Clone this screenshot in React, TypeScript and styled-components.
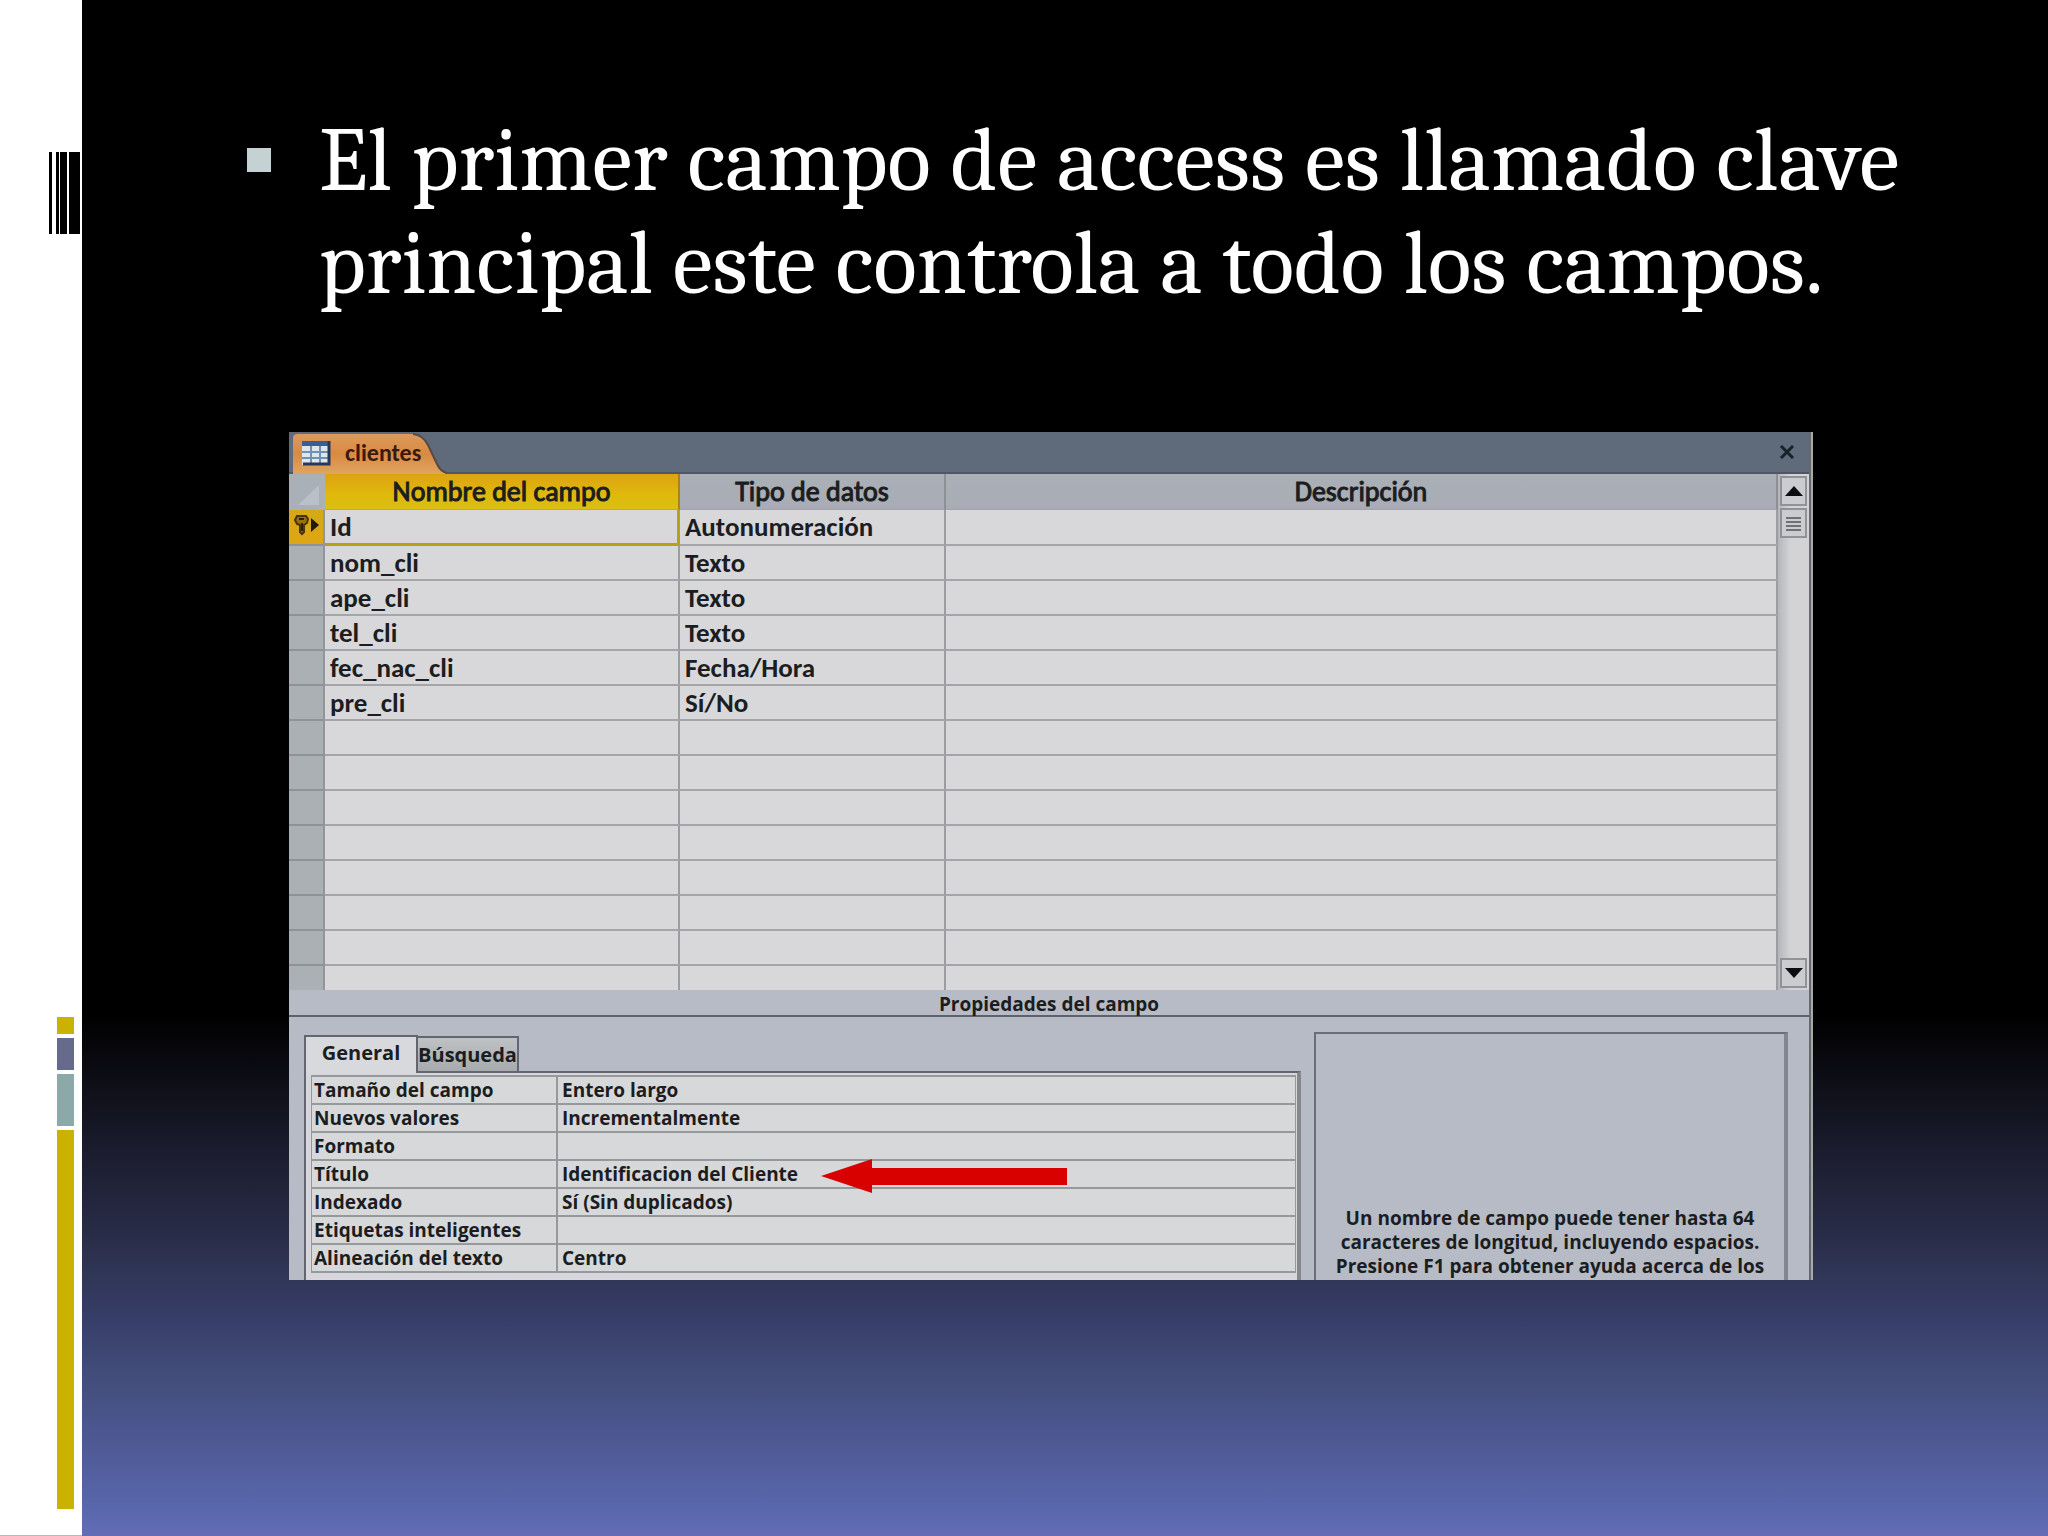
import React, { useState } from "react";
import styled, { createGlobalStyle } from "styled-components";

const gridFont = `Calibri, Carlito, Lato, "Open Sans", sans-serif`;
const propFont = `"Segoe UI", "Open Sans", "Noto Sans", sans-serif`;

const GlobalStyle = createGlobalStyle`
  *, *::before, *::after { box-sizing: border-box; }
  html, body { margin: 0; padding: 0; background: #000; }
  button { font: inherit; color: inherit; margin: 0; padding: 0; border: 0; background: none; }
  h1, p, ul { margin: 0; padding: 0; font-weight: inherit; }
`;

const Slide = styled.div`
  display: flex;
  min-height: 100vh;
  background: linear-gradient(
    to bottom,
    #000 0%,
    #000 66%,
    #0f1019 71%,
    #1b1c2e 75%,
    #282b46 80%,
    #303656 83%,
    #373e69 86%,
    #414b77 89%,
    #485488 92%,
    #515c9a 95%,
    #5866ab 98%,
    #626db5 100%
  );
`;

const Rail = styled.aside`
  flex: 0 0 82px;
  display: flex;
  flex-direction: column;
  justify-content: space-between;
  padding: 152px 2px 26px 49px;
  background: #fff;
  border-bottom: 1px solid #b3b4d6;
`;

const Barcode = styled.div`
  display: flex;
  height: 82px;
`;

const Stripe = styled.span<{ $w: number; $gap: number }>`
  width: ${(p) => p.$w}px;
  margin-right: ${(p) => p.$gap}px;
  background: #000;
`;

const Blocks = styled.div`
  display: flex;
  flex-direction: column;
  gap: 4px;
  padding-left: 8px;
`;

const Block = styled.span<{ $h: number; $color: string }>`
  width: 17px;
  height: ${(p) => p.$h}px;
  background: ${(p) => p.$color};
`;

const Content = styled.main`
  flex: 1;
  min-width: 0;
  padding: 110px 235px 0 207px;
`;

const Points = styled.ul`
  list-style: none;
  margin: 0 -120px 116px -42px;
`;

const Point = styled.li`
  display: flex;
  align-items: flex-start;
  gap: 48px;
  color: #fff;
  font: 90px/103px Cambria, Caladea, "Liberation Serif", serif;
`;

const Marker = styled.span`
  flex: none;
  width: 24px;
  height: 24px;
  margin-top: 38px;
  background: #c5d2d3;
`;

const Window = styled.section`
  height: 848px;
  overflow: hidden;
  background: #b7bbc5;
  border-right: 2px solid #a8aaa6;
  color: #1c1d20;
`;

const Frame = styled.div`
  height: 100%;
  border-right: 2px solid #66696d;
  display: flex;
  flex-direction: column;
`;

const TitleBar = styled.header`
  flex: none;
  display: flex;
  justify-content: space-between;
  height: 42px;
  background: #5f6b7b;
  border-bottom: 2px solid #4e5763;
`;

const FileTab = styled.button`
  position: relative;
  display: flex;
  align-items: center;
  gap: 14px;
  width: 158px;
  height: 42px;
  padding-left: 12px;
  font: 700 24px/28px ${gridFont};
  color: #3a1a10;

  svg, span { position: relative; }
`;

const TabShape = styled.svg`
  && { position: absolute; left: 0; top: 0; }
`;

const CloseButton = styled.button`
  width: 32px;
  height: 40px;
  margin-right: 6px;
  display: grid;
  place-items: center;
`;

const GridArea = styled.div`
  flex: none;
  display: flex;
  height: 516px;
  overflow: hidden;
`;

const Grid = styled.table`
  flex: 1;
  min-width: 0;
  table-layout: fixed;
  border-collapse: separate;
  border-spacing: 0;
  align-self: flex-start;
  font: 700 27px/30px ${gridFont};
`;

const HeadCell = styled.th<{ $active?: boolean }>`
  height: 36px;
  padding: 0;
  font-weight: 400;
  -webkit-text-stroke: 1px #1c1d20;
  font-size: 28px;
  text-align: center;
  background: ${(p) =>
    p.$active
      ? "linear-gradient(#dda311, #dfb90c 60%, #d9bf10)"
      : "linear-gradient(#aab0b6, #a9acb6)"};
  border-right: 2px solid ${(p) => (p.$active ? "#a8850e" : "#8d9095")};
  border-bottom: 1px solid #a5a88e;
`;

const CornerCell = styled.th`
  height: 36px;
  padding: 0 0 4px 8px;
  vertical-align: bottom;
  background: #a9b0b8;

  svg { display: block; }
`;

const Selector = styled.th<{ $active?: boolean }>`
  height: 35px;
  padding: 0;
  background: ${(p) => (p.$active ? "linear-gradient(#d3a917, #e0a514)" : "#abb0b4")};
  border-right: 2px solid #92969a;
  border-bottom: 2px solid #8f9396;

  svg { display: block; margin: 0 0 4px 5px; }
`;

const Cell = styled.td<{ $active?: boolean }>`
  height: ${(p) => (p.$active ? 36 : 35)}px;
  padding: 0 0 0 5px;
  white-space: nowrap;
  background: #d8d8da;
  border-right: 2px solid #9b9da0;
  border-bottom: 2px solid #a4a5a8;
  ${(p) =>
    p.$active &&
    `
    border-right: 3px solid #b8a114;
    border-bottom: 3px solid #b8a114;
  `}
`;

const ScrollBar = styled.div`
  flex: 0 0 31px;
  display: flex;
  flex-direction: column;
  padding: 2px 2px 2px 2px;
  gap: 2px;
  background: linear-gradient(to right, #b4b6bb, #d3d3d6 12px);
`;

const ScrollButton = styled.button<{ $last?: boolean }>`
  height: 30px;
  width: 27px;
  margin-top: ${(p) => (p.$last ? "auto" : "0")};
  display: grid;
  place-items: center;
  background: #cbccd0;
  border: 2px solid #909297;
`;

const PropsTitle = styled.h2`
  flex: none;
  margin: 0;
  height: 27px;
  text-align: center;
  font: 700 19px/28px ${propFont};
  border-bottom: 2px solid #5d616b;
`;

const PropsArea = styled.div`
  flex: 1;
  display: flex;
  gap: 13px;
  padding: 15px 21px 0 15px;
`;

const Tabbed = styled.div`
  flex: 1;
  min-width: 0;
  display: flex;
  flex-direction: column;
`;

const TabList = styled.div`
  display: flex;
  align-items: flex-end;
  padding-top: 3px;
`;

const PropTab = styled.button<{ $active: boolean }>`
  width: ${(p) => (p.$active ? 114 : 101)}px;
  height: ${(p) => (p.$active ? 38 : 35)}px;
  margin-bottom: ${(p) => (p.$active ? -2 : 0)}px;
  padding-bottom: ${(p) => (p.$active ? 4 : 0)}px;
  position: relative;
  font: 700 20px/26px ${propFont};
  white-space: nowrap;
  background: ${(p) => (p.$active ? "#d8d9dc" : "linear-gradient(#bfc2c4, #a8abad)")};
  border: 2px solid #63666f;
  border-bottom: 0;
  border-left-width: ${(p) => (p.$active ? 2 : 0)}px;
`;

const Panel = styled.div`
  flex: 1;
  padding: 2px 1px 0 5px;
  background: #d6d6dc;
  border: 2px solid #63666f;
  border-right: 4px solid #85878b;
  border-bottom: 0;
`;

const PropTable = styled.table`
  width: 100%;
  table-layout: fixed;
  border-collapse: separate;
  border-spacing: 0;
  border-top: 2px solid #96999c;
  border-left: 1px solid #96999c;
  background: #d7d8d9;
  font: 700 19px/26px ${propFont};
`;

const PropName = styled.th`
  height: 28px;
  padding: 0 0 0 2px;
  text-align: left;
  font-weight: 700;
  white-space: nowrap;
  border-right: 2px solid #96999c;
  border-bottom: 2px solid #96999c;
`;

const PropValue = styled.td`
  position: relative;
  height: 28px;
  padding: 0 0 0 4px;
  white-space: nowrap;
  border-bottom: 2px solid #96999c;
  border-right: 1px solid #96999c;
`;

const Arrow = styled.svg`
  position: absolute;
  left: 263px;
  top: -2px;
  z-index: 1;
`;

const Help = styled.aside`
  flex: 0 0 474px;
  padding-top: 172px;
  border: 2px solid #6b6e78;
  border-right: 4px solid #83868e;
  border-bottom: 0;
  font: 700 19px/24px ${propFont};
  text-align: center;
  white-space: nowrap;
`;

const fields = [
  ["Id", "Autonumeración"],
  ["nom_cli", "Texto"],
  ["ape_cli", "Texto"],
  ["tel_cli", "Texto"],
  ["fec_nac_cli", "Fecha/Hora"],
  ["pre_cli", "Sí/No"],
  ...Array.from({ length: 8 }, () => ["", ""]),
];

const properties = [
  ["Tamaño del campo", "Entero largo"],
  ["Nuevos valores", "Incrementalmente"],
  ["Formato", ""],
  ["Título", "Identificacion del Cliente"],
  ["Indexado", "Sí (Sin duplicados)"],
  ["Etiquetas inteligentes", ""],
  ["Alineación del texto", "Centro"],
];

const GridCol = styled.col<{ $w?: number }>`
  width: ${(p) => (p.$w ? `${p.$w}px` : "auto")};
`;

const TableIcon = () => (
  <svg width="30" height="26" viewBox="0 0 30 26" aria-hidden="true">
    <rect x="1" y="1" width="28" height="24" fill="#dfe6ea" />
    <rect x="1" y="1" width="28" height="5" fill="#3c5e96" />
    <path d="M1 12H29M1 18H29M10 6V24M19 6V24" stroke="#6e91b8" strokeWidth="2" />
    <path d="M28 1V24H2" fill="none" stroke="#26385c" strokeWidth="3" />
  </svg>
);

const KeyIcon = () => (
  <svg width="26" height="22" viewBox="0 0 26 22" aria-hidden="true">
    <path
      d="M3 2H12L14 5L13 9L10 11V18L8 20L6 18V11L3 10L1 6Z"
      fill="#96700f"
      stroke="#4a3408"
      strokeWidth="2"
    />
    <path d="M5 5H10M8 9V17" stroke="#2f2208" strokeWidth="2" />
    <path d="M17 4L25 11L17 18Z" fill="#1f1a0c" />
  </svg>
);

export default function App() {
  const [tab, setTab] = useState("General");

  return (
    <Slide>
      <GlobalStyle />
      <Rail>
        <Barcode>
          <Stripe $w={3} $gap={4} />
          <Stripe $w={3} $gap={1} />
          <Stripe $w={7} $gap={2} />
          <Stripe $w={11} $gap={0} />
        </Barcode>
        <Blocks>
          <Block $h={17} $color="#c9b200" />
          <Block $h={32} $color="#666a8b" />
          <Block $h={52} $color="#8ca9a9" />
          <Block $h={379} $color="#c9b200" />
        </Blocks>
      </Rail>

      <Content>
        <Points>
          <Point>
            <Marker />
            <p>El primer campo de access es llamado clave principal este controla a todo los campos.</p>
          </Point>
        </Points>

        <Window>
          <Frame>
            <TitleBar>
              <FileTab type="button">
                <TabShape width="158" height="42" viewBox="0 0 158 42" aria-hidden="true">
                  <defs>
                    <linearGradient id="tab" x1="0" y1="0" x2="0" y2="1">
                      <stop offset="0" stopColor="#dc9a5c" />
                      <stop offset="0.5" stopColor="#d98a42" />
                      <stop offset="1" stopColor="#dfa562" />
                    </linearGradient>
                  </defs>
                  <path d="M4 42V6Q4 2 9 2H124Q134 3 139 13L148 32Q151 39 158 42Z" fill="url(#tab)" />
                  <path d="M124 2Q134 3 139 13L148 32Q151 39 158 41" fill="none" stroke="#5a4a40" strokeWidth="2" />
                </TabShape>
                <TableIcon />
                <span>clientes</span>
              </FileTab>
              <CloseButton type="button" aria-label="Cerrar">
                <svg width="16" height="14" viewBox="0 0 16 14" aria-hidden="true">
                  <path d="M2 1L14 13M14 1L2 13" stroke="#18222b" strokeWidth="3" />
                </svg>
              </CloseButton>
            </TitleBar>

            <GridArea>
              <Grid>
                <colgroup>
                  <GridCol $w={36} />
                  <GridCol $w={355} />
                  <GridCol $w={266} />
                  <GridCol />
                </colgroup>
                <thead>
                  <tr>
                    <CornerCell aria-label="Seleccionar todo">
                      <svg width="24" height="22" viewBox="0 0 24 22" aria-hidden="true">
                        <path d="M22 1V21H1Z" fill="#b9c0c8" />
                      </svg>
                    </CornerCell>
                    <HeadCell $active>Nombre del campo</HeadCell>
                    <HeadCell>Tipo de datos</HeadCell>
                    <HeadCell>Descripción</HeadCell>
                  </tr>
                </thead>
                <tbody>
                  {fields.map(([name, type], i) => (
                    <tr key={i}>
                      <Selector $active={i === 0}>{i === 0 && <KeyIcon />}</Selector>
                      <Cell $active={i === 0}>{name}</Cell>
                      <Cell>{type}</Cell>
                      <Cell />
                    </tr>
                  ))}
                </tbody>
              </Grid>
              <ScrollBar>
                <ScrollButton type="button" aria-label="Subir">
                  <svg width="18" height="10" viewBox="0 0 18 10" aria-hidden="true">
                    <path d="M9 0L18 10H0Z" fill="#0c0d10" />
                  </svg>
                </ScrollButton>
                <ScrollButton type="button" aria-label="Desplazar">
                  <svg width="15" height="15" viewBox="0 0 15 15" aria-hidden="true">
                    <path d="M0 2H15M0 6H15M0 10H15M0 14H15" stroke="#6f7175" strokeWidth="2" />
                  </svg>
                </ScrollButton>
                <ScrollButton type="button" aria-label="Bajar" $last>
                  <svg width="18" height="10" viewBox="0 0 18 10" aria-hidden="true">
                    <path d="M0 0H18L9 10Z" fill="#0c0d10" />
                  </svg>
                </ScrollButton>
              </ScrollBar>
            </GridArea>

            <PropsTitle>Propiedades del campo</PropsTitle>
            <PropsArea>
              <Tabbed>
                <TabList role="tablist">
                  {["General", "Búsqueda"].map((t) => (
                    <PropTab
                      key={t}
                      type="button"
                      role="tab"
                      aria-selected={t === tab}
                      $active={t === tab}
                      onClick={() => setTab(t)}
                    >
                      {t}
                    </PropTab>
                  ))}
                </TabList>
                <Panel role="tabpanel">
                  <PropTable>
                    <colgroup>
                      <col width="25%" />
                      <col />
                    </colgroup>
                    <tbody>
                      {properties.map(([name, value]) => (
                        <tr key={name}>
                          <PropName scope="row">{name}</PropName>
                          <PropValue>
                            {value}
                            {name === "Título" && (
                              <Arrow width="246" height="34" viewBox="0 0 246 34" aria-hidden="true">
                                <path d="M0 17L51 0V9H246V26H51V34Z" fill="#d90000" />
                              </Arrow>
                            )}
                          </PropValue>
                        </tr>
                      ))}
                    </tbody>
                  </PropTable>
                </Panel>
              </Tabbed>
              <Help>
                Un nombre de campo puede tener hasta 64
                <br />
                caracteres de longitud, incluyendo espacios.
                <br />
                Presione F1 para obtener ayuda acerca de los
              </Help>
            </PropsArea>
          </Frame>
        </Window>
      </Content>
    </Slide>
  );
}
